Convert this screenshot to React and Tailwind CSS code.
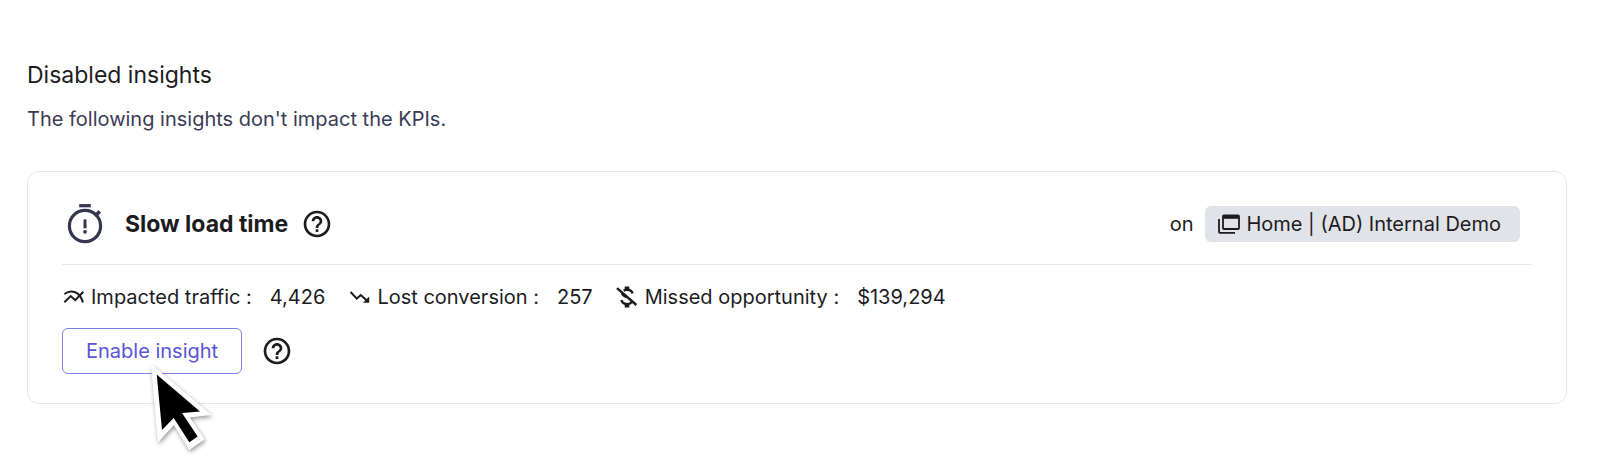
import { MdHelpOutline } from "react-icons/md";

function TrafficIcon() {
  return (
    <svg viewBox="0 0 24 24" className="mr-[5px] size-6" fill="none" stroke="currentColor" strokeWidth="2" aria-hidden="true">
      <path d="M2.3 9C8.5 4.6 17.5 5.2 21 17.6" />
      <path d="M2.3 17.2 8.7 11l4.6 4.2L21.3 6.8" />
    </svg>
  );
}

function LostIcon() {
  return (
    <svg viewBox="0 0 24 24" className="mr-[5px] size-6" fill="none" stroke="currentColor" strokeWidth="2" aria-hidden="true">
      <path d="M2.6 7l6.2 6.6 4-3.6 6.4 6" />
      <path d="M21.2 11.6v6.2H15z" fill="currentColor" stroke="none" />
    </svg>
  );
}

function MissedIcon() {
  return (
    <svg viewBox="0 0 24 24" className="mr-[5px] size-6" fill="none" stroke="currentColor" strokeWidth="2.4" aria-hidden="true">
      <path d="M1 3.2 20.4 20" />
      <path d="M11 1.5v3.2M11 19v3.4" strokeWidth="4.6" />
      <path d="M16.6 8.6C16 6 14 4.8 11.2 4.8c-1.4 0-2.6.3-3.5.9M6 8.2c.2 2 2 3 4.8 3.8M16 16.4c-.8 1.9-2.6 2.7-4.8 2.7-3 0-5.2-1.300-5.800-4" />
    </svg>
  );
}

const stats = [
  { Icon: TrafficIcon, label: "Impacted traffic :", value: "4,426" },
  { Icon: LostIcon, label: "Lost conversion :", value: "257" },
  { Icon: MissedIcon, label: "Missed opportunity :", value: "$139,294" },
];

function StopwatchIcon() {
  return (
    <svg viewBox="0 0 36 40" className="h-10 w-9" fill="none" stroke="currentColor" aria-hidden="true">
      <circle cx="18" cy="22" r="15.6" strokeWidth="3.2" />
      <path d="M12.200 1.700h11.600" strokeWidth="3.200" />
      <path d="M28 12l4.800-4.600" strokeWidth="3.600" />
      <path d="M18 15.400v9" strokeWidth="3" />
      <circle cx="18" cy="27.800" r="1.900" fill="currentColor" stroke="none" />
    </svg>
  );
}

function PagesIcon() {
  return (
    <svg viewBox="0 0 22 20" className="h-5 w-[22px]" fill="none" stroke="currentColor" strokeWidth="1.800" aria-hidden="true">
      <rect x="5" y="1.300" width="16" height="13.700" rx="1" />
      <path d="M5 2.900h16" strokeWidth="3.800" />
      <path d="M1 5v12.800a1 1 0 0 0 1 1h15" />
    </svg>
  );
}

function HelpButton({ label }) {
  return (
    <button type="button" aria-label={label} className="text-[#1c1c1f]">
      <MdHelpOutline className="size-8" />
    </button>
  );
}

function Pointer() {
  return (
    <svg
      viewBox="0 0 60 86"
      className="pointer-events-none absolute top-[37px] left-[89px] h-[86px] w-[60px] overflow-visible drop-shadow-[1px_2px_2px_rgba(0,0,0,0.4)]"
      aria-hidden="true"
    >
      <path
        fill="#fff"
        stroke="#fff"
        strokeLinejoin="round"
        d="M.5 0 59.5 49.500 38 52 53 74.300 38.300 84.500 23 59.500 7.300 76.500Z"
      />
      <path fill="#000" d="M5.700 9.600 49 46.500 31 48 46.700 71.500 38.300 77.300 22.700 53 11 65Z" />
    </svg>
  );
}

export default function App() {
  return (
    <main className="min-h-screen bg-white px-[27px] pt-[57px] pb-16 font-['Inter',sans-serif] text-xl text-[#1c1c1f] lg:pr-[35px]">
      <h1 className="text-[23px] leading-9">Disabled insights</h1>
      <p className="mt-2.5 leading-8 text-[#3a3b55]">The following insights don't impact the KPIs.</p>

      <section className="mt-9 rounded-xl border border-[#e8e8ea] px-[34px] pt-[30px] pb-[29px]">
        <header className="flex flex-wrap items-center justify-between gap-4 border-b border-[#e8e8ea] pb-[18px]">
          <div className="flex items-center pl-[5px]">
            <span className="text-[#35364f]">
              <StopwatchIcon />
            </span>
            <h2 className="mr-[13px] ml-[22px] text-[23px] leading-11 font-bold">Slow load time</h2>
            <HelpButton label="About slow load time" />
          </div>
          <div className="flex items-center gap-3 pr-3">
            <span>on</span>
            <span className="flex h-9 items-center gap-1.5 rounded-md bg-[#e2e3e8] pr-[19px] pl-[13px]">
              <PagesIcon />
              Home | (AD) Internal Demo
            </span>
          </div>
        </header>

        <dl className="mt-4 flex flex-wrap items-center gap-x-[23px] leading-8">
          {stats.map(({ Icon, label, value }) => (
            <div key={label} className="flex items-center">
              <Icon />
              <dt>{label}</dt>
              <dd className="ml-[18px]">{value}</dd>
            </div>
          ))}
        </dl>

        <div className="relative mt-[15px] flex items-center gap-[19px]">
          <button type="button" className="h-[46px] rounded-md border border-[#8080e8] px-[23px] text-[#5a55d6]">
            Enable insight
          </button>
          <HelpButton label="About enabling insights" />
          <Pointer />
        </div>
      </section>
    </main>
  );
}
